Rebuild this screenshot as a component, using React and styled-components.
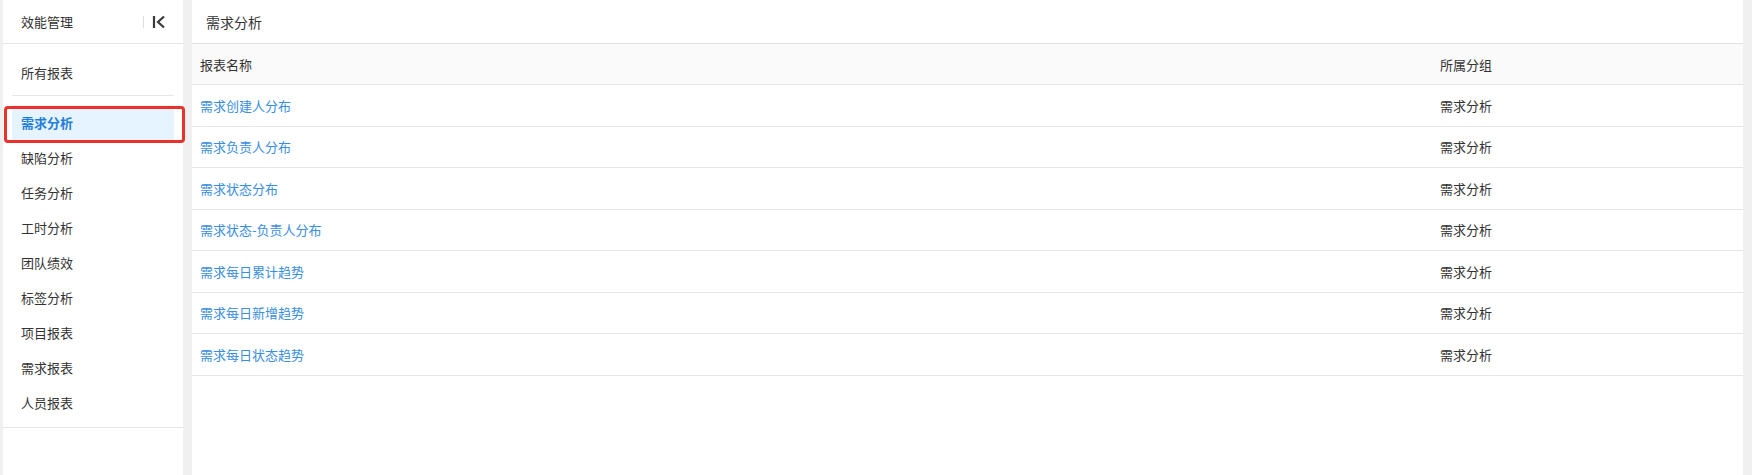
import styled, { createGlobalStyle } from 'styled-components';

const GlobalStyle = createGlobalStyle`
  html, body {
    margin: 0;
    padding: 0;
    background: #f0f0f0;
    font-family: "Noto Sans CJK SC", "Noto Sans", sans-serif;
    color: #333;
  }
`;

const Page = styled.div`
  display: flex;
  gap: 9px;
  height: 475px;
  padding: 0 9px 0 3px;
  box-sizing: border-box;
`;

const Sidebar = styled.aside`
  width: 180px;
  flex-shrink: 0;
  background: #fff;
  display: flex;
  flex-direction: column;
`;

const SideHeader = styled.div`
  height: 43px;
  display: flex;
  align-items: center;
  justify-content: space-between;
  padding: 0 17px 0 18px;
  border-bottom: 1px solid #e6e6e6;
  font-size: 13px;
`;

const CollapseBtn = styled.div`
  display: flex;
  align-items: center;
  gap: 8px;

  &::before {
    content: '';
    width: 1px;
    height: 12px;
    background: #ddd;
  }
`;

const AllReports = styled.div`
  height: 52px;
  display: flex;
  align-items: center;
  padding: 6px 0 0 18px;
  box-sizing: border-box;
  font-size: 13px;
  border-bottom: 1px solid #e6e6e6;
  margin: 0 9px;
  padding-left: 9px;
`;

const MenuList = styled.ul`
  list-style: none;
  margin: 0;
  padding: 9px 9px 7px;
  border-bottom: 1px solid #e6e6e6;
`;

const MenuItem = styled.li`
  position: relative;
  height: 35px;
  display: flex;
  align-items: center;
  padding-left: 9px;
  font-size: 13px;
  color: ${(p) => (p.$active ? '#1f7fd8' : '#333')};
  font-weight: ${(p) => (p.$active ? 600 : 400)};
  background: ${(p) => (p.$active ? '#e6f4ff' : 'transparent')};
`;

const Highlight = styled.span`
  position: absolute;
  top: 1px;
  left: -8px;
  right: -11px;
  bottom: -3px;
  border: 3px solid #e8322b;
  border-radius: 4px;
  pointer-events: none;
`;

const Main = styled.main`
  flex: 1;
  background: #fff;
`;

const MainHeader = styled.div`
  height: 43px;
  display: flex;
  align-items: center;
  padding-left: 14px;
  font-size: 14px;
  border-bottom: 1px solid #e2e2e2;
`;

const Row = styled.div`
  display: grid;
  grid-template-columns: 1240px 1fr;
  height: 41.5px;
  box-sizing: border-box;
  align-items: center;
  font-size: 13px;
  border-bottom: 1px solid #e6e6e6;
  background: ${(p) => (p.$head ? '#fafafa' : '#fff')};
  height: ${(p) => (p.$head ? '41px' : '41.5px')};
`;

const Cell = styled.div`
  padding-left: 8px;
`;

const ReportLink = styled.a`
  color: #3a8ee0;
  text-decoration: none;
  cursor: pointer;
`;

const menu = ['需求分析', '缺陷分析', '任务分析', '工时分析', '团队绩效', '标签分析', '项目报表', '需求报表', '人员报表'];

const reports = [
  '需求创建人分布',
  '需求负责人分布',
  '需求状态分布',
  '需求状态-负责人分布',
  '需求每日累计趋势',
  '需求每日新增趋势',
  '需求每日状态趋势',
];

const CollapseIcon = () => (
  <svg width="14" height="14" viewBox="0 0 14 14" fill="none" stroke="#3a3a3a" strokeWidth="2.2">
    <line x1="2" y1="1" x2="2" y2="13" />
    <polyline points="12,1.5 6,7 12,12.5" strokeLinejoin="miter" />
  </svg>
);

export default function App() {
  return (
    <>
      <GlobalStyle />
      <Page>
        <Sidebar>
          <SideHeader>
            <span>效能管理</span>
            <CollapseBtn>
              <CollapseIcon />
            </CollapseBtn>
          </SideHeader>
          <AllReports>所有报表</AllReports>
          <MenuList>
            {menu.map((m, i) => (
              <MenuItem key={m} $active={i === 0}>
                {m}
                {i === 0 && <Highlight />}
              </MenuItem>
            ))}
          </MenuList>
        </Sidebar>
        <Main>
          <MainHeader>需求分析</MainHeader>
          <Row $head>
            <Cell>报表名称</Cell>
            <Cell>所属分组</Cell>
          </Row>
          {reports.map((r) => (
            <Row key={r}>
              <Cell>
                <ReportLink>{r}</ReportLink>
              </Cell>
              <Cell>需求分析</Cell>
            </Row>
          ))}
        </Main>
      </Page>
    </>
  );
}
